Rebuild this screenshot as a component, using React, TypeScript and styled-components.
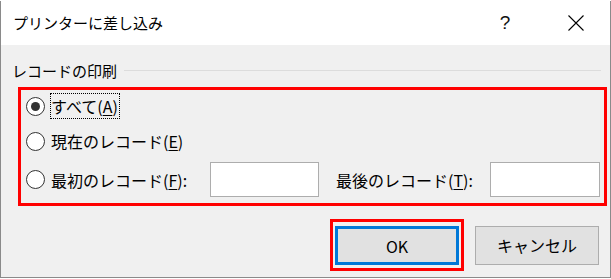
import React from 'react'
import styled, {createGlobalStyle} from 'styled-components'

const GlobalStyle = createGlobalStyle`
  html, body {
    margin: 0;
    padding: 0;
    background: #ffffff;
  }
  body {
    font-family: "Noto Sans CJK JP", "Noto Sans", sans-serif;
    color: #000000;
  }
`

const Dialog = styled.div`
  box-sizing: border-box;
  margin-top: 1px;
  width: 611px;
  height: 277px;
  border: 1px solid #8a8a8a;
  border-top: none;
  background: #f0f0f0;
  display: flex;
  flex-direction: column;
`

const TitleBar = styled.div`
  height: 44px;
  background: #ffffff;
  display: flex;
  align-items: center;
  padding-left: 12px;
`

const TitleText = styled.div`
  flex: 1;
  font-size: 15px;
  line-height: 20px;
`

const HelpButton = styled.div`
  width: 46px;
  margin-right: 14px;
  text-align: center;
  font-family: "Liberation Sans", sans-serif;
  font-size: 19px;
  line-height: 20px;
  color: #111;
`

const CloseButton = styled.div`
  width: 68px;
  height: 44px;
  display: flex;
  align-items: center;
  justify-content: center;
`

const Body = styled.div`
  flex: 1;
  display: flex;
  flex-direction: column;
  padding: 15px 3px 0 17px;
`

const GroupHeader = styled.div`
  display: flex;
  align-items: center;
  margin-left: -6px;
  margin-right: 6px;
  height: 20px;
  font-size: 15px;
`

const GroupLine = styled.div`
  flex: 1;
  height: 1px;
  background: #dcdcdc;
  margin-left: 7px;
`

const Highlight = styled.div`
  border: 3px solid #ff0000;
`

const Options = styled(Highlight)`
  margin-top: 7px;
  padding: 0 0 6px 5px;
  display: flex;
  flex-direction: column;
`

const Row = styled.div<{$h: number; $top?: number}>`
  height: ${(p) => p.$h}px;
  margin-top: ${(p) => p.$top ?? 0}px;
  display: flex;
  align-items: center;
  font-size: 16px;
`

const Radio = styled.span<{$checked?: boolean}>`
  box-sizing: border-box;
  width: 19px;
  height: 19px;
  flex: none;
  border-radius: 50%;
  border: 1px solid #333;
  background: #ffffff;
  display: flex;
  align-items: center;
  justify-content: center;

  &::after {
    content: '';
    display: ${(p) => (p.$checked ? 'block' : 'none')};
    width: 9px;
    height: 9px;
    border-radius: 50%;
    background: #333;
  }
`

const Label = styled.span<{$focused?: boolean; $width?: number}>`
  box-sizing: border-box;
  margin-left: 5px;
  padding: 0 1px 0 0;
  line-height: 24px;
  border: 1px dotted ${(p) => (p.$focused ? '#000' : 'transparent')};
  ${(p) => (p.$width ? `width: ${p.$width}px;` : '')}
  white-space: nowrap;
`

const AccessKey = styled.span`
  text-decoration: underline;
  text-underline-offset: 2px;
`

const NumberInput = styled.input.attrs({type: 'text'})<{$width: number}>`
  box-sizing: border-box;
  width: ${(p) => p.$width}px;
  height: 35px;
  border: 1px solid #adadad;
  background: #ffffff;
  outline: none;
`

const SecondLabel = styled(Label)`
  margin-left: 16px;
`

const ButtonRow = styled.div`
  margin-top: 13px;
  margin-right: 8px;
  display: flex;
  justify-content: flex-end;
  align-items: center;
  gap: 11px;
`

const OkFrame = styled(Highlight)`
  padding: 4px 2px 3px 2px;
`

const Button = styled.button<{$default?: boolean}>`
  box-sizing: border-box;
  width: 124px;
  height: 39px;
  background: #e1e1e1;
  border: ${(p) => (p.$default ? '3px solid #0078d7' : '1px solid #adadad')};
  font-family: "Noto Sans CJK JP", "Noto Sans", sans-serif;
  font-size: 16px;
  font-weight: 400;
  color: #000;
  padding: 0;
  display: block;
`

const CloseIcon = () => (
  <svg width="16" height="16" viewBox="0 0 16 16">
    <path d="M0.5 0.5L15.5 15.5M15.5 0.5L0.5 15.5" stroke="#000" strokeWidth="1.1" fill="none" />
  </svg>
)

export default function App() {
  return (
    <>
      <GlobalStyle />
      <Dialog>
        <TitleBar>
          <TitleText>プリンターに差し込み</TitleText>
          <HelpButton>?</HelpButton>
          <CloseButton>
            <CloseIcon />
          </CloseButton>
        </TitleBar>
        <Body>
          <GroupHeader>
            レコードの印刷
            <GroupLine />
          </GroupHeader>
          <Options>
            <Row $h={32}>
              <Radio $checked />
              <Label $focused>
                すべて(<AccessKey>A</AccessKey>)
              </Label>
            </Row>
            <Row $h={38}>
              <Radio />
              <Label>
                現在のレコード(<AccessKey>E</AccessKey>)
              </Label>
            </Row>
            <Row $h={35} $top={2}>
              <Radio />
              <Label $width={160}>
                最初のレコード(<AccessKey>F</AccessKey>):
              </Label>
              <NumberInput $width={109} />
              <SecondLabel $width={155}>
                最後のレコード(<AccessKey>T</AccessKey>):
              </SecondLabel>
              <NumberInput $width={110} />
            </Row>
          </Options>
          <ButtonRow>
            <OkFrame>
              <Button $default>OK</Button>
            </OkFrame>
            <Button>キャンセル</Button>
          </ButtonRow>
        </Body>
      </Dialog>
    </>
  )
}
